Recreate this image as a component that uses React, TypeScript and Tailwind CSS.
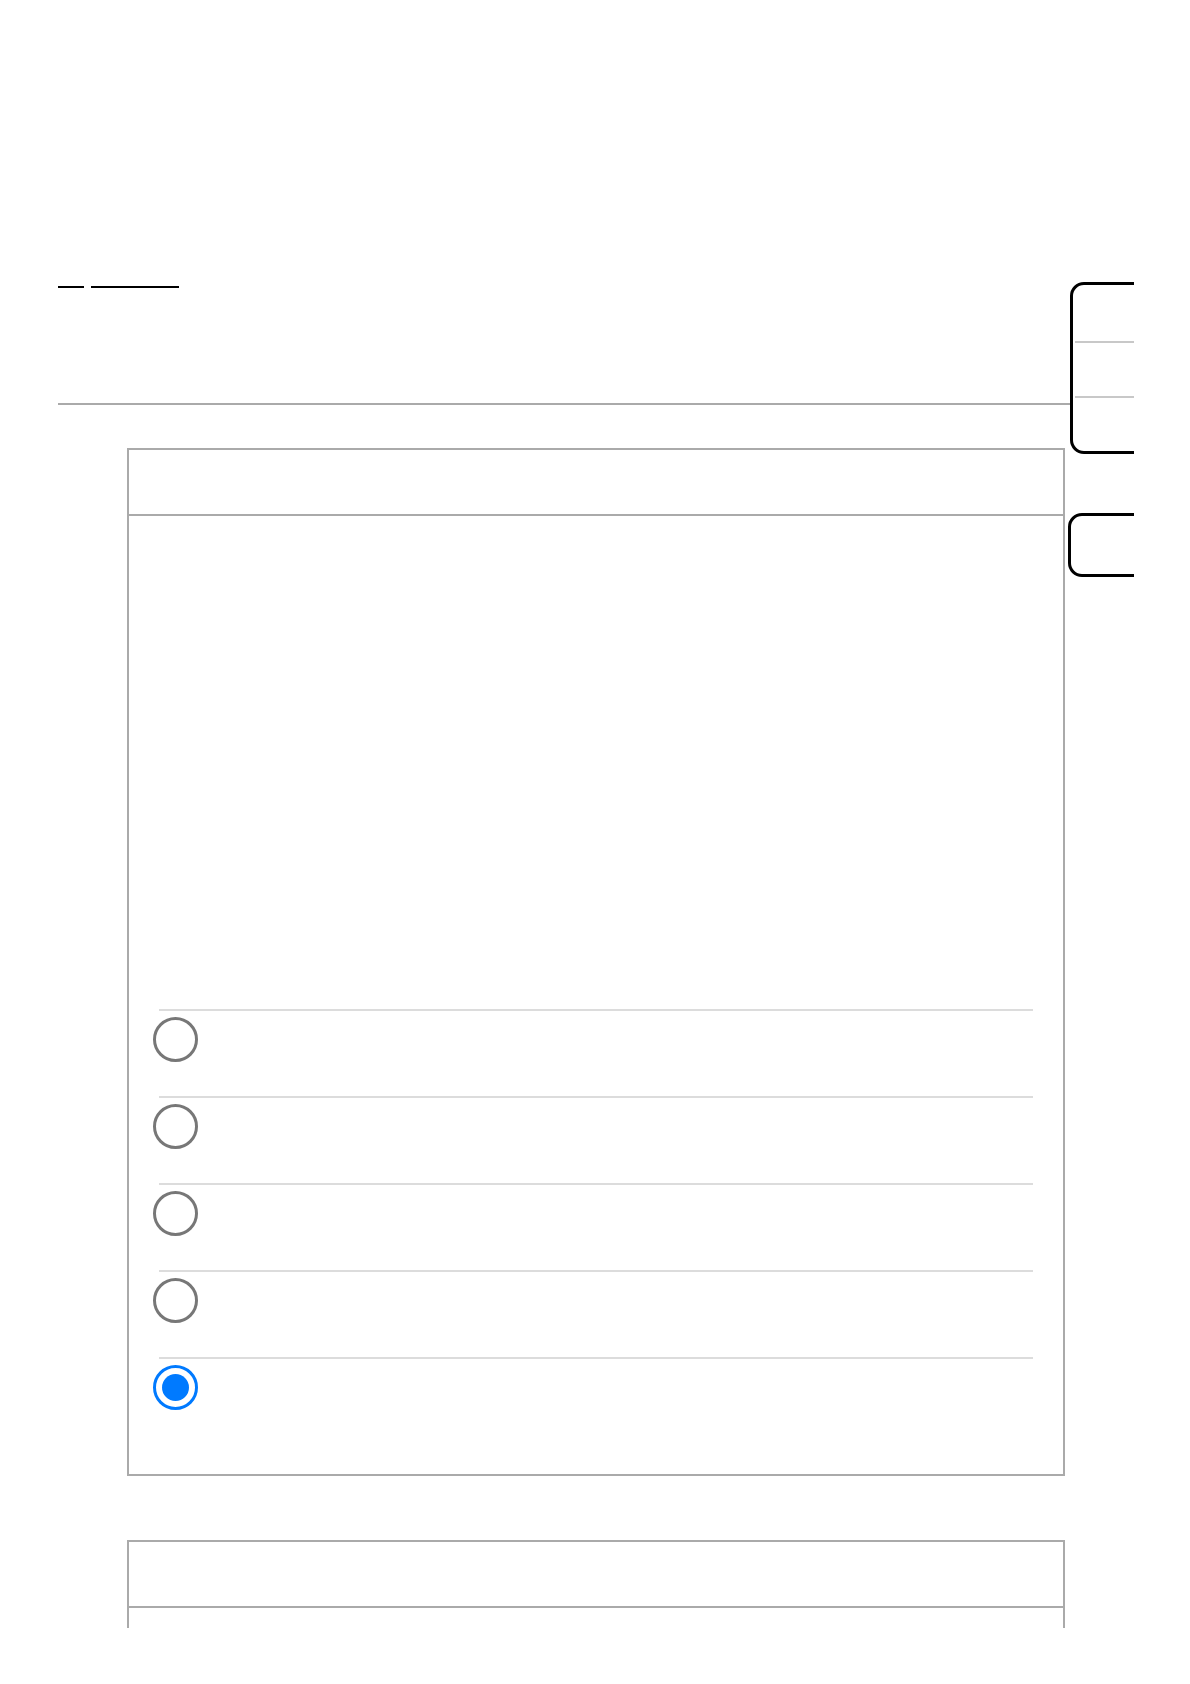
import React from 'react';

const options = [false, false, false, false, true];

const Radio: React.FC<{ checked: boolean }> = ({ checked }) => (
  <div
    className={
      checked
        ? 'w-[45px] h-[45px] -ml-[6px] rounded-full border-[3px] border-[#007aff] flex items-center justify-center shrink-0'
        : 'w-[45px] h-[45px] -ml-[6px] rounded-full border-[3px] border-[#777777] shrink-0'
    }
  >
    {checked && <div className="w-[27px] h-[27px] rounded-full bg-[#007aff]" />}
  </div>
);

const Card: React.FC<{ children?: React.ReactNode; className?: string }> = ({ children, className }) => (
  <div className={`ml-[69px] w-[938px] border-2 border-[#aaaaaa] bg-white ${className ?? ''}`}>
    <div className="h-[66px] border-b-2 border-[#aaaaaa]" />
    {children}
  </div>
);

export default function App() {
  return (
    <div className="min-h-screen bg-white" style={{ fontFamily: '"Liberation Sans", Arial, sans-serif' }}>
      <div className="w-[1134px] h-[1628px] overflow-hidden">
        <div className="pt-[282px] flex">
          {/* main column */}
          <div className="ml-[58px] w-[1010px] shrink-0">
            <div className="mt-[4px] flex items-center gap-[7px]">
              <span className="block w-[26px] h-[2px] bg-black" />
              <span className="block w-[88px] h-[2px] bg-black" />
            </div>
            <div className="mt-[115px] h-[2px] bg-[#aaaaaa] w-[1012px]" />

            <Card className="mt-[43px]">
              <div className="h-[493px]" />
              <div className="px-[30px]">
                {options.map((checked, i) => (
                  <div
                    key={i}
                    className={`border-t-2 border-[#dcdcdc] pt-[6px] flex items-start ${
                      i === options.length - 1 ? 'h-[117px]' : 'h-[87px]'
                    }`}
                  >
                    <Radio checked={checked} />
                  </div>
                ))}
              </div>
            </Card>

            <Card className="mt-[64px]">
              <div className="h-[200px]" />
            </Card>
          </div>

          {/* side panels */}
          <div className="shrink-0 w-[200px]">
            <div className="ml-[2px] w-[200px] h-[172px] border-[3px] border-black rounded-[14px] flex flex-col">
              <div className="h-[56px]" />
              <div className="ml-[2px] h-[2px] bg-[#c8c8c8]" />
              <div className="h-[53px]" />
              <div className="ml-[2px] h-[2px] bg-[#c8c8c8]" />
              <div className="flex-1" />
            </div>
            <div className="mt-[59px] w-[200px] h-[64px] border-[3px] border-black rounded-[14px]" />
          </div>
        </div>
      </div>
    </div>
  );
}
